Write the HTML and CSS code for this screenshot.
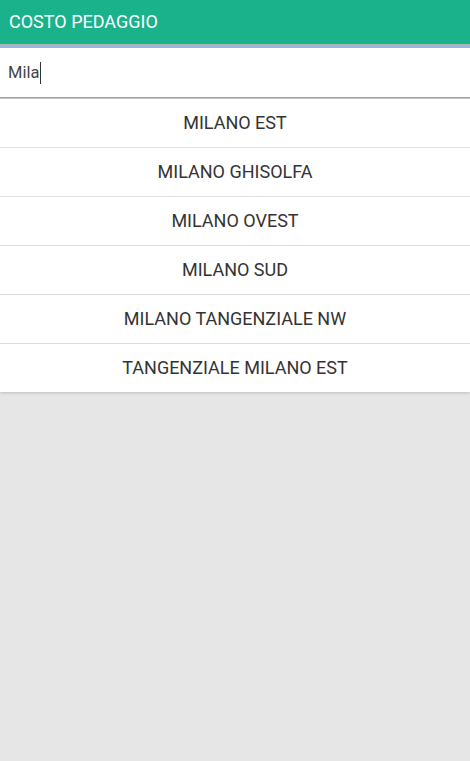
FILE: index.html
```html
<!DOCTYPE html>
<html>
<head>
<meta charset="utf-8">
<link rel="stylesheet" href="styles.css">
</head>
<body>
<header class="appbar">COSTO PEDAGGIO</header>
<div class="sep-grey"></div>
<div class="sep-blue"></div>
<div class="search">
  <span class="query">Mila</span><span class="caret"></span>
</div>
<div class="search-line"></div>
<ul class="results">
  <li>MILANO EST</li>
  <li>MILANO GHISOLFA</li>
  <li>MILANO OVEST</li>
  <li>MILANO SUD</li>
  <li>MILANO TANGENZIALE NW</li>
  <li>TANGENZIALE MILANO EST</li>
</ul>
</body>
</html>
```
FILE: styles.css
```css
html, body {
  margin: 0;
  padding: 0;
  height: 100%;
}
body {
  background: #e6e6e6;
  font-family: Roboto, "Noto Sans", sans-serif;
}
.appbar {
  height: 44px;
  background: #19b28a;
  color: #ffffff;
  font-size: 18px;
  line-height: 43px;
  padding-left: 9px;
  box-sizing: border-box;
}
.sep-grey {
  height: 2px;
  background: #aeb2b0;
}
.sep-blue {
  height: 2px;
  background: #8fb8e4;
}
.search {
  height: 49px;
  background: #ffffff;
  display: flex;
  align-items: center;
  padding-left: 8px;
  color: #444444;
  font-size: 16.5px;
}
.caret {
  display: inline-block;
  width: 1px;
  height: 22px;
  background: #333333;
  margin-left: 1px;
}
.search-line {
  height: 1px;
  background: #7aaee0;
  border-bottom: 1px solid #cccccc;
}
.results {
  list-style: none;
  margin: 0;
  padding: 0;
  background: #ffffff;
  box-shadow: 0 1px 3px rgba(0,0,0,0.18);
}
.results li {
  height: 48px;
  line-height: 48px;
  text-align: center;
  font-size: 18px;
  color: #333333;
  border-top: 1px solid #dddddd;
}
.results li:first-child {
  border-top: none;
}
```
